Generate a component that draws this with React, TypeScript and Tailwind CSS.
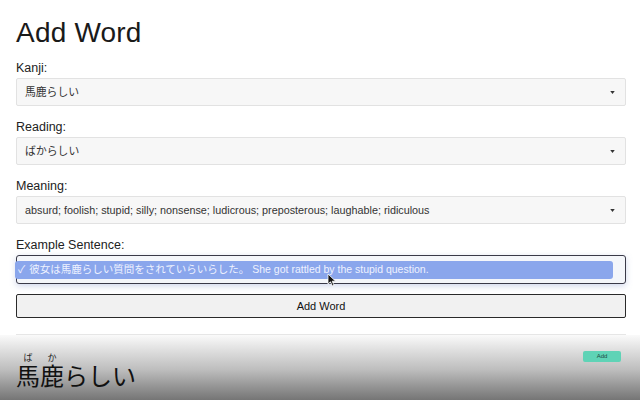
import { useState } from 'react';

const fields = [
  { label: 'Kanji:', value: '馬鹿らしい' },
  { label: 'Reading:', value: 'ばからしい' },
  { label: 'Meaning:', value: 'absurd; foolish; stupid; silly; nonsense; ludicrous; preposterous; laughable; ridiculous' },
];

const font = { fontFamily: '"Liberation Sans", "Noto Sans CJK JP", sans-serif' };

function Caret() {
  return (
    <svg width="5" height="3" viewBox="0 0 6 4" className="shrink-0">
      <path d="M0 0 L6 0 L3 4 Z" fill="#333" />
    </svg>
  );
}

export default function App() {
  const [sentence] = useState('彼女は馬鹿らしい質問をされていらいらした。 She got rattled by the stupid question.');

  return (
    <div className="relative w-[640px] h-[400px] overflow-hidden bg-white text-[#222]" style={font}>
      <div className="px-4 pt-[15px]">
        <h1 className="text-[28px] leading-[36px] font-normal text-[#1a1a1a] tracking-[0.2px]">Add Word</h1>

        <div className="mt-[9px] flex flex-col gap-[13px]">
          {fields.map(f => (
            <div key={f.label}>
              <label className="block text-[12.5px] leading-[16px] mb-[2px] text-[#222]">{f.label}</label>
              <div className="h-[28px] w-[610px] flex items-center justify-between pl-[8px] pr-[10px] bg-[#f7f7f7] border border-[#e2e2e2] rounded-[2px]">
                <span className="text-[10.8px] text-[#333]">{f.value}</span>
                <Caret />
              </div>
            </div>
          ))}

          <div>
            <label className="block text-[12.5px] leading-[16px] mb-[2px] text-[#222]">Example Sentence:</label>
            <div className="h-[29px] w-[610px] flex items-center pr-[12px] bg-[#f4f6fa] border border-[#3a3a48] rounded-[3px] shadow-[0_2px_6px_rgba(120,140,200,0.35)]">
              <div className="-ml-[2px] h-[18px] w-[600px] flex items-center gap-[4px] px-[3px] bg-[#8aa6ec] rounded-[3px] text-[10.5px] text-[#eef2ff]">
                <span>✓</span>
                <span>{sentence}</span>
              </div>
            </div>
          </div>
        </div>

        <button className="mt-[10px] h-[24px] w-[610px] bg-[#f1f1f1] border border-[#2a2a2a] rounded-[2px] text-[11px] text-[#111]">
          Add Word
        </button>

        <div className="mt-[16px] h-px w-[610px] bg-[#e6e6e6]" />
      </div>

      {/* word card */}
      <div className="h-[70px] bg-gradient-to-b from-[#fafafa] via-[#bdbdbd] to-[#6a6a6a] px-4 pt-[18px] flex justify-between items-start">
        <ruby className="text-[24px] leading-[28px] text-[#111]">
          馬<rt className="text-[9px] text-[#222]">ば</rt>鹿<rt className="text-[9px] text-[#222]">か</rt>らしい
        </ruby>
        <div className="mr-[3px] -mt-[2px] w-[38px] h-[11px] leading-[11px] text-center rounded-[2px] bg-[#5fd3b6] text-[6px] text-[#1d4a3e]">
          Add
        </div>
      </div>

      {/* mouse pointer */}
      <svg className="absolute left-[327px] top-[273px]" width="10" height="14" viewBox="0 0 10 14">
        <path d="M1 1 L1 11 L3.5 8.8 L5.4 13 L7 12.3 L5.2 8.2 L8.6 8.2 Z" fill="#111" stroke="#fff" strokeWidth="0.8" />
      </svg>
    </div>
  );
}
